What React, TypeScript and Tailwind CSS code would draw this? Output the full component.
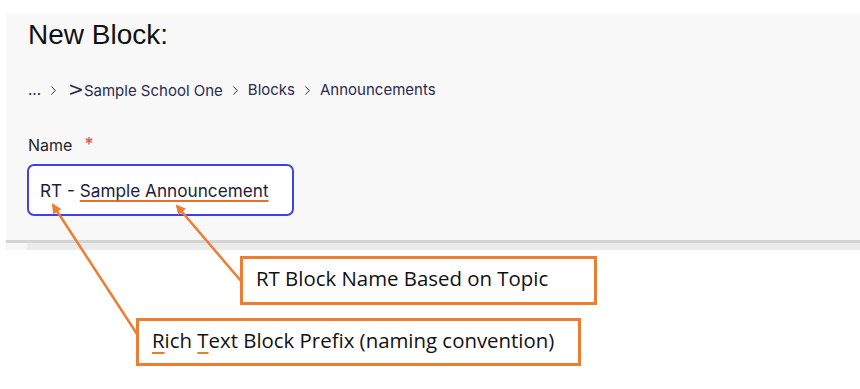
import { ChevronRight } from "lucide-react";

function Crumb({ children }: { children: React.ReactNode }) {
  return <span className="whitespace-nowrap">{children}</span>;
}

function Sep() {
  return <ChevronRight size={15} strokeWidth={1.6} className="mx-[5px] text-[#2a2a52]" />;
}

export default function App() {
  return (
    <div className="relative w-[860px] h-[389px] bg-white overflow-hidden font-['Inter',sans-serif]">
      {/* form panel */}
      <div className="ml-[6px] mt-[14px] h-[226px] bg-[#f8f8f8] pl-[22px] pt-[7px]">
        <h1 className="font-['Liberation_Sans',Arial,sans-serif] text-[28px] leading-[28px] text-[#111]">
          New Block:
        </h1>

        <nav className="mt-[30px] flex items-center text-[15px] leading-[20px] text-[#2a2a52]">
          <Crumb>...</Crumb>
          <Sep />
          <Crumb>
            <span className="font-['DejaVu_Sans',sans-serif] text-[19px] leading-[20px] ml-[2px]">&gt;</span>
            Sample School One
          </Crumb>
          <Sep />
          <Crumb>Blocks</Crumb>
          <Sep />
          <Crumb>Announcements</Crumb>
        </nav>

        <div className="mt-[34px] flex items-center gap-[12px] text-[16px] leading-[20px] text-[#1f1f2e]">
          <span>Name</span>
          <span className="text-[#e5484d] text-[18px]">*</span>
        </div>

        <div className="mt-[9px] -ml-[1px] w-[267px] h-[52px] rounded-[7px] border-2 border-[#3f3ff2] bg-white flex items-center pl-[11px] pt-[1px]">
          <span className="text-[17.2px] text-[#1d1d3a] whitespace-nowrap">
            RT -{" "}
            <span className="underline decoration-[#e8702a] decoration-2 underline-offset-[3px] [text-decoration-skip-ink:none]">
              Sample Announcement
            </span>
          </span>
        </div>
      </div>
      <div className="ml-[6px] h-[3px] bg-[#d4d4d4]" />
      <div className="ml-[6px] h-[7px] flex">
        <div className="w-[21px] bg-[#f6f6f6]" />
        <div className="flex-1 bg-[#ebebeb]" />
      </div>

      {/* callouts */}
      <div className="font-['Open_Sans',sans-serif] text-[20.4px] leading-[26px] text-[#111]">
        <div className="ml-[240px] mt-[6px] w-[357px] h-[49px] border-[3px] border-[#ED7D31] flex items-center pl-[13px] pb-[5px]">
          RT Block Name Based on Topic
        </div>
        <div className="ml-[136px] mt-[13px] w-[445px] h-[48px] border-[3px] border-[#ED7D31] flex items-center pl-[13px] pb-[5px]">
          <span>
            <span className="underline decoration-[#ED7D31] decoration-2 underline-offset-[4px] [text-decoration-skip-ink:none]">R</span>ich{" "}
            <span className="underline decoration-[#ED7D31] decoration-2 underline-offset-[4px] [text-decoration-skip-ink:none]">T</span>ext Block
            Prefix (naming convention)
          </span>
        </div>
      </div>

      {/* arrows */}
      <svg className="absolute inset-0 pointer-events-none" width="860" height="389" viewBox="0 0 860 389">
        <defs>
          <marker id="head" markerWidth="10" markerHeight="10" refX="8" refY="5" orient="auto" markerUnits="userSpaceOnUse">
            <path d="M0,0 L10,5 L0,10 Z" fill="#ED7D31" />
          </marker>
        </defs>
        <line x1="137" y1="334" x2="53" y2="205" stroke="#ED7D31" strokeWidth="2.5" markerEnd="url(#head)" />
        <line x1="241" y1="281" x2="177" y2="206" stroke="#ED7D31" strokeWidth="2.5" markerEnd="url(#head)" />
      </svg>
    </div>
  );
}
